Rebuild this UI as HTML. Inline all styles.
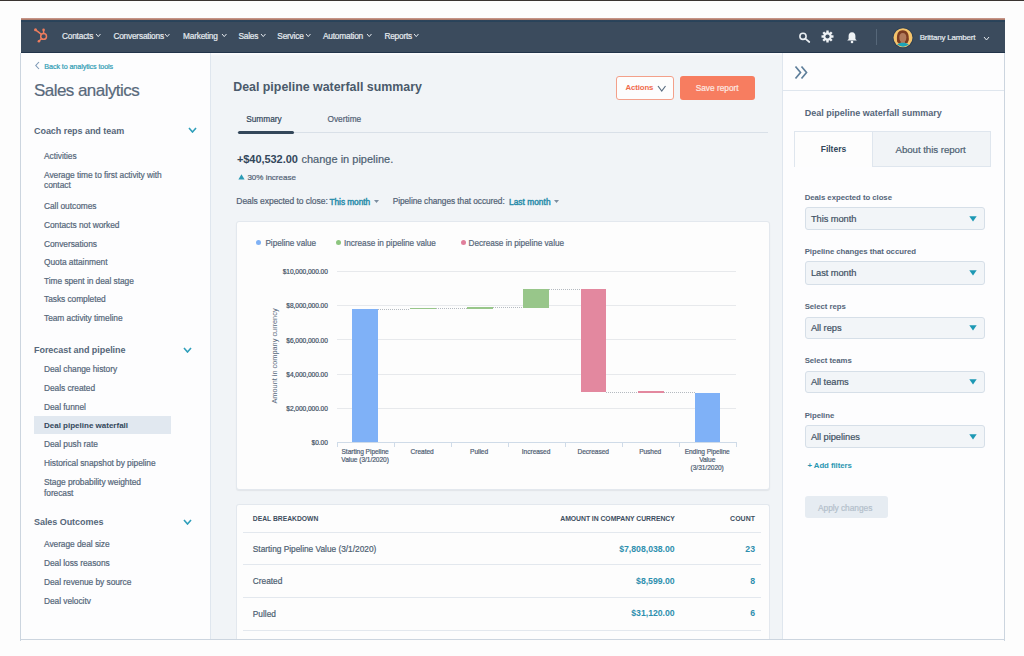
<!DOCTYPE html>
<html><head><meta charset="utf-8"><style>
html,body{margin:0;padding:0;}
body{width:1024px;height:656px;position:relative;overflow:hidden;background:#fdfdfd;font-family:"Liberation Sans", sans-serif;}
.t{position:absolute;white-space:nowrap;}
.r{-webkit-text-stroke:0.2px currentColor;}
</style></head><body>
<div style="position:absolute;left:0px;top:0px;width:1024px;height:1px;background:#3a3431;"></div>
<div style="position:absolute;left:21px;top:18px;width:984px;height:2px;background:linear-gradient(#cf9f94,#a5705f);"></div>
<div style="position:absolute;left:21px;top:20px;width:984px;height:33px;background:#3b4b5d;"></div>
<div style="position:absolute;left:21px;top:20px;width:984px;height:2px;background:linear-gradient(#2e445a,#27435a);"></div>
<div style="position:absolute;left:21px;top:52px;width:984px;height:1px;background:#22344a;"></div>
<div style="position:absolute;left:21px;top:53px;width:984px;height:587px;background:#fdfdfe;"></div>
<div style="position:absolute;left:20px;top:53px;width:1px;height:588px;background:#ccd5df;"></div>
<div style="position:absolute;left:1004px;top:53px;width:1px;height:588px;background:#ccd5df;"></div>
<div style="position:absolute;left:20px;top:639px;width:985px;height:1px;background:#ccd5df;"></div>
<div style="position:absolute;left:211px;top:53px;width:571px;height:586px;background:#f1f4f7;"></div>
<div style="position:absolute;left:211px;top:53px;width:571px;height:2.5px;background:linear-gradient(#fdfdfe,#f1f4f7);"></div>
<div style="position:absolute;left:210px;top:53px;width:1px;height:586px;background:#dfe6ee;"></div>
<div style="position:absolute;left:782px;top:53px;width:1px;height:586px;background:#dfe6ee;"></div>
<svg style="position:absolute;left:33px;top:27px" width="16" height="17" viewBox="0 0 16 17">
<g fill="none" stroke="#ee7d5e" stroke-width="1.5" stroke-linecap="round">
<circle cx="10.6" cy="9.4" r="2.9"/>
<line x1="10.6" y1="6.5" x2="10.6" y2="3.2"/>
<line x1="8.5" y1="7.4" x2="2.8" y2="3.1"/>
<line x1="8.6" y1="11.5" x2="6.1" y2="14"/>
</g>
<circle cx="10.6" cy="2.8" r="1.3" fill="#ee7d5e"/>
<circle cx="2.5" cy="2.8" r="1.5" fill="#ee7d5e"/>
<circle cx="5.9" cy="14.2" r="1.3" fill="#ee7d5e"/>
</svg>
<div class="t r" style="left:62px;top:31.55px;font-size:8.3px;line-height:8.3px;font-weight:400;color:#e6ebf0;letter-spacing:-0.2px;">Contacts</div>
<svg style="position:absolute;left:94.7px;top:33.2px" width="6.5" height="4.6" viewBox="0 0 6.5 4.6"><polyline points="1,1 3.25,3.6 5.5,1" fill="none" stroke="#e6ebf0" stroke-width="1"/></svg>
<div class="t r" style="left:113.4px;top:31.55px;font-size:8.3px;line-height:8.3px;font-weight:400;color:#e6ebf0;letter-spacing:-0.2px;">Conversations</div>
<svg style="position:absolute;left:164.39999999999998px;top:33.2px" width="6.5" height="4.6" viewBox="0 0 6.5 4.6"><polyline points="1,1 3.25,3.6 5.5,1" fill="none" stroke="#e6ebf0" stroke-width="1"/></svg>
<div class="t r" style="left:183px;top:31.55px;font-size:8.3px;line-height:8.3px;font-weight:400;color:#e6ebf0;letter-spacing:-0.2px;">Marketing</div>
<svg style="position:absolute;left:220.79999999999998px;top:33.2px" width="6.5" height="4.6" viewBox="0 0 6.5 4.6"><polyline points="1,1 3.25,3.6 5.5,1" fill="none" stroke="#e6ebf0" stroke-width="1"/></svg>
<div class="t r" style="left:238.4px;top:31.55px;font-size:8.3px;line-height:8.3px;font-weight:400;color:#e6ebf0;letter-spacing:-0.2px;">Sales</div>
<svg style="position:absolute;left:259.59999999999997px;top:33.2px" width="6.5" height="4.6" viewBox="0 0 6.5 4.6"><polyline points="1,1 3.25,3.6 5.5,1" fill="none" stroke="#e6ebf0" stroke-width="1"/></svg>
<div class="t r" style="left:277.3px;top:31.55px;font-size:8.3px;line-height:8.3px;font-weight:400;color:#e6ebf0;letter-spacing:-0.2px;">Service</div>
<svg style="position:absolute;left:304.6px;top:33.2px" width="6.5" height="4.6" viewBox="0 0 6.5 4.6"><polyline points="1,1 3.25,3.6 5.5,1" fill="none" stroke="#e6ebf0" stroke-width="1"/></svg>
<div class="t r" style="left:323px;top:31.55px;font-size:8.3px;line-height:8.3px;font-weight:400;color:#e6ebf0;letter-spacing:-0.2px;">Automation</div>
<svg style="position:absolute;left:366.3px;top:33.2px" width="6.5" height="4.6" viewBox="0 0 6.5 4.6"><polyline points="1,1 3.25,3.6 5.5,1" fill="none" stroke="#e6ebf0" stroke-width="1"/></svg>
<div class="t r" style="left:384.4px;top:31.55px;font-size:8.3px;line-height:8.3px;font-weight:400;color:#e6ebf0;letter-spacing:-0.2px;">Reports</div>
<svg style="position:absolute;left:413.29999999999995px;top:33.2px" width="6.5" height="4.6" viewBox="0 0 6.5 4.6"><polyline points="1,1 3.25,3.6 5.5,1" fill="none" stroke="#e6ebf0" stroke-width="1"/></svg>
<svg style="position:absolute;left:797.8px;top:31px" width="13" height="13" viewBox="0 0 13 13"><circle cx="5" cy="5.3" r="3.1" fill="none" stroke="#e9eef2" stroke-width="1.6"/><line x1="7.3" y1="7.6" x2="11.3" y2="11" stroke="#e9eef2" stroke-width="1.7" stroke-linecap="round"/></svg>
<svg style="position:absolute;left:821px;top:30.3px" width="13" height="13" viewBox="0 0 13 13"><g transform="translate(6.5 6.5)" fill="#eef2f5"><circle r="4.2"/><g id="tooth"><rect x="-1.2" y="-6" width="2.4" height="3" /></g><rect x="-1.2" y="-6" width="2.4" height="3" transform="rotate(45)"/><rect x="-1.2" y="-6" width="2.4" height="3" transform="rotate(90)"/><rect x="-1.2" y="-6" width="2.4" height="3" transform="rotate(135)"/><rect x="-1.2" y="-6" width="2.4" height="3" transform="rotate(180)"/><rect x="-1.2" y="-6" width="2.4" height="3" transform="rotate(225)"/><rect x="-1.2" y="-6" width="2.4" height="3" transform="rotate(270)"/><rect x="-1.2" y="-6" width="2.4" height="3" transform="rotate(315)"/></g><circle cx="6.5" cy="6.5" r="2.1" fill="#3b4b5d"/></svg>
<svg style="position:absolute;left:846px;top:31px" width="12" height="13" viewBox="0 0 12 13"><path d="M6 1.2 C3.6 1.2 2.6 3 2.6 5 L2.6 8 L1.2 9.6 L10.8 9.6 L9.4 8 L9.4 5 C9.4 3 8.4 1.2 6 1.2 Z" fill="#eef2f5"/><circle cx="6" cy="11" r="1.3" fill="#eef2f5"/></svg>
<div style="position:absolute;left:876px;top:29px;width:1px;height:16px;background:#566779;"></div>
<svg style="position:absolute;left:892px;top:26.5px" width="22" height="22" viewBox="0 0 22 22"><circle cx="11" cy="10.8" r="10.4" fill="#2c3e52"/><circle cx="11" cy="10.8" r="9.5" fill="#f5c46c"/><path d="M5.2 15 C4.2 8 5.5 3.2 10.8 3.2 C15.5 3.2 17 7 16.8 13 L15.5 16 L7 16.5 Z" fill="#7b3c22"/><ellipse cx="10.8" cy="10.4" rx="3.5" ry="4.5" fill="#b07a5c"/><path d="M8.8 14 L12.8 14 L13 16 L8.6 16 Z" fill="#b07a5c"/><path d="M5.2 17.6 C6.5 16.4 8.5 15.8 10.8 15.8 C13.3 15.8 15.3 16.4 16.8 17.6 A9.3 9.3 0 0 1 5.2 17.6 Z" fill="#1ca5b8"/></svg>
<div class="t r" style="left:919.7px;top:34.30px;font-size:8px;line-height:8px;font-weight:400;color:#e6ebf0;letter-spacing:-0.2px;">Brittany Lambert</div>
<svg style="position:absolute;left:982.5px;top:36px" width="7" height="5" viewBox="0 0 7 5"><polyline points="1,1 3.5,4 6,1" fill="none" stroke="#e6ebf0" stroke-width="1"/></svg>
<svg style="position:absolute;left:34px;top:61px" width="7" height="9" viewBox="0 0 7 9"><polyline points="5,1 1.8,4.5 5,8" fill="none" stroke="#7c98b6" stroke-width="1.1"/></svg>
<div class="t r" style="left:44.3px;top:62.70px;font-size:7.2px;line-height:7.2px;font-weight:400;color:#2e9cb4;letter-spacing:-0.1px;">Back to analytics tools</div>
<div class="t r" style="left:34px;top:82.00px;font-size:17px;line-height:17px;font-weight:400;color:#58697b;letter-spacing:-0.55px;">Sales analytics</div>
<div class="t" style="left:34px;top:126.70px;font-size:9px;line-height:9px;font-weight:700;color:#56677a;letter-spacing:-0.05px;">Coach reps and team</div>
<svg style="position:absolute;left:187.5px;top:127.0px" width="9" height="6" viewBox="0 0 9 6"><polyline points="1,1 4.5,5 8,1" fill="none" stroke="#2f9fbb" stroke-width="1.6"/></svg>
<div class="t" style="left:34px;top:346.20px;font-size:9px;line-height:9px;font-weight:700;color:#56677a;letter-spacing:-0.05px;">Forecast and pipeline</div>
<svg style="position:absolute;left:183px;top:346.5px" width="9" height="6" viewBox="0 0 9 6"><polyline points="1,1 4.5,5 8,1" fill="none" stroke="#2f9fbb" stroke-width="1.6"/></svg>
<div class="t" style="left:34px;top:518.30px;font-size:9px;line-height:9px;font-weight:700;color:#56677a;letter-spacing:-0.05px;">Sales Outcomes</div>
<svg style="position:absolute;left:183px;top:518.6px" width="9" height="6" viewBox="0 0 9 6"><polyline points="1,1 4.5,5 8,1" fill="none" stroke="#2f9fbb" stroke-width="1.6"/></svg>
<div class="t r" style="left:44px;top:152.10px;font-size:8.4px;line-height:8.4px;font-weight:400;color:#55677a;letter-spacing:-0.05px;">Activities</div>
<div class="t r" style="left:44px;top:170.50px;font-size:8.4px;line-height:8.4px;font-weight:400;color:#55677a;letter-spacing:-0.05px;">Average time to first activity with</div>
<div class="t r" style="left:44px;top:180.90px;font-size:8.4px;line-height:8.4px;font-weight:400;color:#55677a;letter-spacing:-0.05px;">contact</div>
<div class="t r" style="left:44px;top:202.00px;font-size:8.4px;line-height:8.4px;font-weight:400;color:#55677a;letter-spacing:-0.05px;">Call outcomes</div>
<div class="t r" style="left:44px;top:220.80px;font-size:8.4px;line-height:8.4px;font-weight:400;color:#55677a;letter-spacing:-0.05px;">Contacts not worked</div>
<div class="t r" style="left:44px;top:239.50px;font-size:8.4px;line-height:8.4px;font-weight:400;color:#55677a;letter-spacing:-0.05px;">Conversations</div>
<div class="t r" style="left:44px;top:258.00px;font-size:8.4px;line-height:8.4px;font-weight:400;color:#55677a;letter-spacing:-0.05px;">Quota attainment</div>
<div class="t r" style="left:44px;top:276.80px;font-size:8.4px;line-height:8.4px;font-weight:400;color:#55677a;letter-spacing:-0.05px;">Time spent in deal stage</div>
<div class="t r" style="left:44px;top:295.30px;font-size:8.4px;line-height:8.4px;font-weight:400;color:#55677a;letter-spacing:-0.05px;">Tasks completed</div>
<div class="t r" style="left:44px;top:313.80px;font-size:8.4px;line-height:8.4px;font-weight:400;color:#55677a;letter-spacing:-0.05px;">Team activity timeline</div>
<div class="t r" style="left:44px;top:365.40px;font-size:8.4px;line-height:8.4px;font-weight:400;color:#55677a;letter-spacing:-0.05px;">Deal change history</div>
<div class="t r" style="left:44px;top:384.10px;font-size:8.4px;line-height:8.4px;font-weight:400;color:#55677a;letter-spacing:-0.05px;">Deals created</div>
<div class="t r" style="left:44px;top:402.50px;font-size:8.4px;line-height:8.4px;font-weight:400;color:#55677a;letter-spacing:-0.05px;">Deal funnel</div>
<div class="t r" style="left:44px;top:440.10px;font-size:8.4px;line-height:8.4px;font-weight:400;color:#55677a;letter-spacing:-0.05px;">Deal push rate</div>
<div class="t r" style="left:44px;top:458.60px;font-size:8.4px;line-height:8.4px;font-weight:400;color:#55677a;letter-spacing:-0.05px;">Historical snapshot by pipeline</div>
<div class="t r" style="left:44px;top:477.50px;font-size:8.4px;line-height:8.4px;font-weight:400;color:#55677a;letter-spacing:-0.05px;">Stage probability weighted</div>
<div class="t r" style="left:44px;top:488.90px;font-size:8.4px;line-height:8.4px;font-weight:400;color:#55677a;letter-spacing:-0.05px;">forecast</div>
<div class="t r" style="left:44px;top:540.30px;font-size:8.4px;line-height:8.4px;font-weight:400;color:#55677a;letter-spacing:-0.05px;">Average deal size</div>
<div class="t r" style="left:44px;top:559.30px;font-size:8.4px;line-height:8.4px;font-weight:400;color:#55677a;letter-spacing:-0.05px;">Deal loss reasons</div>
<div class="t r" style="left:44px;top:578.00px;font-size:8.4px;line-height:8.4px;font-weight:400;color:#55677a;letter-spacing:-0.05px;">Deal revenue by source</div>
<div class="t r" style="left:44px;top:596.80px;font-size:8.4px;line-height:8.4px;font-weight:400;color:#55677a;letter-spacing:-0.05px;">Deal velocitv</div>
<div style="position:absolute;left:34px;top:416px;width:136.5px;height:17.5px;background:#e1e8f0;"></div>
<div class="t" style="left:44px;top:421.60px;font-size:8px;line-height:8px;font-weight:700;color:#33475b;letter-spacing:0px;">Deal pipeline waterfall</div>
<div class="t" style="left:233.2px;top:81.10px;font-size:12.4px;line-height:12.4px;font-weight:700;color:#4a5a6b;letter-spacing:0px;">Deal pipeline waterfall summary</div>
<div style="position:absolute;left:616px;top:76px;width:57.5px;height:23.5px;border:1px solid #f3a08a;border-radius:3px;background:#fdfdfd;box-sizing:border-box;"></div>
<div class="t" style="left:625.4px;top:84.30px;font-size:7.8px;line-height:7.8px;font-weight:700;color:#f06a4b;letter-spacing:-0.1px;">Actions</div>
<svg style="position:absolute;left:657.3px;top:84.6px" width="9.5" height="7" viewBox="0 0 9.5 7"><polyline points="1,1 4.75,6 8.5,1" fill="none" stroke="#5b6e82" stroke-width="1.2"/></svg>
<div style="position:absolute;left:680px;top:76px;width:75px;height:23.5px;background:#f77d60;border-radius:3px;"></div>
<div class="t r" style="left:695.7px;top:84.35px;font-size:8.3px;line-height:8.3px;font-weight:400;color:#fde9e3;letter-spacing:0px;">Save report</div>
<div class="t r" style="left:246.2px;top:115.25px;font-size:8.3px;line-height:8.3px;font-weight:400;color:#33475b;letter-spacing:0px;">Summary</div>
<div class="t r" style="left:327.5px;top:115.25px;font-size:8.3px;line-height:8.3px;font-weight:400;color:#516275;letter-spacing:0px;">Overtime</div>
<div style="position:absolute;left:237px;top:131.8px;width:531px;height:1.0px;background:#d9e0e8;"></div>
<div style="position:absolute;left:238px;top:130.7px;width:56px;height:3.200000000000017px;background:#34475a;border-radius:2px;"></div>
<div class="t" style="left:236.9px;top:154.40px;font-size:11px;line-height:11px;font-weight:700;color:#33475b;letter-spacing:-0.05px;">+$40,532.00</div>
<div class="t r" style="left:301.5px;top:154.40px;font-size:11px;line-height:11px;font-weight:400;color:#4d5f72;letter-spacing:0px;">change in pipeline.</div>
<svg style="position:absolute;left:238px;top:174px" width="7" height="6" viewBox="0 0 7 6"><polygon points="3.5,0.3 6.6,5.6 0.4,5.6" fill="#2a9bb5"/></svg>
<div class="t r" style="left:247.4px;top:174.00px;font-size:8px;line-height:8px;font-weight:400;color:#516275;letter-spacing:0px;">30% increase</div>
<div class="t r" style="left:236.3px;top:197.35px;font-size:8.5px;line-height:8.5px;font-weight:400;color:#516275;letter-spacing:-0.05px;">Deals expected to close:</div>
<div class="t r" style="left:329.5px;top:197.75px;font-size:8.3px;line-height:8.3px;font-weight:400;color:#2a8dab;letter-spacing:-0.05px;-webkit-text-stroke:0.45px currentColor;">This month</div>
<svg style="position:absolute;left:374px;top:200px" width="5" height="3" viewBox="0 0 5 3"><polygon points="0,0 5,0 2.5,3" fill="#7c8ea0"/></svg>
<div class="t r" style="left:392.7px;top:197.45px;font-size:8.3px;line-height:8.3px;font-weight:400;color:#516275;letter-spacing:-0.05px;">Pipeline changes that occured:</div>
<div class="t r" style="left:509px;top:197.75px;font-size:8.3px;line-height:8.3px;font-weight:400;color:#2a8dab;letter-spacing:0.05px;-webkit-text-stroke:0.45px currentColor;">Last month</div>
<svg style="position:absolute;left:553.5px;top:200px" width="5" height="3" viewBox="0 0 5 3"><polygon points="0,0 5,0 2.5,3" fill="#7c8ea0"/></svg>
<div style="position:absolute;left:235.5px;top:221px;width:534.0px;height:268.5px;background:#fdfdfd;border:1px solid #e3e8ee;border-radius:3px;box-sizing:border-box;box-shadow:0 1px 1px rgba(45,62,80,0.08);"></div>
<div style="position:absolute;left:256.2px;top:239.7px;width:5.0px;height:5.0px;background:#7fb1f5;border-radius:50%;"></div>
<div class="t r" style="left:265.4px;top:239.50px;font-size:8.2px;line-height:8.2px;font-weight:400;color:#56677a;letter-spacing:-0.02px;">Pipeline value</div>
<div style="position:absolute;left:336.2px;top:239.7px;width:5.0px;height:5.0px;background:#8cc57e;border-radius:50%;"></div>
<div class="t r" style="left:344px;top:239.50px;font-size:8.2px;line-height:8.2px;font-weight:400;color:#56677a;letter-spacing:-0.02px;">Increase in pipeline value</div>
<div style="position:absolute;left:460.7px;top:239.7px;width:5.0px;height:5.0px;background:#e07f9b;border-radius:50%;"></div>
<div class="t r" style="left:468.5px;top:239.50px;font-size:8.2px;line-height:8.2px;font-weight:400;color:#56677a;letter-spacing:-0.02px;">Decrease in pipeline value</div>
<div style="position:absolute;left:336.6px;top:271px;width:399.1px;height:1px;background:#e7e9ec;"></div>
<div class="t r" style="right:696.2px;top:269.20px;font-size:6.6px;line-height:6.6px;font-weight:400;color:#3f5164;letter-spacing:-0.05px;">$10,000,000.00</div>
<div style="position:absolute;left:336.6px;top:305px;width:399.1px;height:1px;background:#e7e9ec;"></div>
<div class="t r" style="right:696.2px;top:303.40px;font-size:6.6px;line-height:6.6px;font-weight:400;color:#3f5164;letter-spacing:-0.05px;">$8,000,000.00</div>
<div style="position:absolute;left:336.6px;top:339px;width:399.1px;height:1px;background:#e7e9ec;"></div>
<div class="t r" style="right:696.2px;top:337.60px;font-size:6.6px;line-height:6.6px;font-weight:400;color:#3f5164;letter-spacing:-0.05px;">$6,000,000.00</div>
<div style="position:absolute;left:336.6px;top:374px;width:399.1px;height:1px;background:#e7e9ec;"></div>
<div class="t r" style="right:696.2px;top:371.80px;font-size:6.6px;line-height:6.6px;font-weight:400;color:#3f5164;letter-spacing:-0.05px;">$4,000,000.00</div>
<div style="position:absolute;left:336.6px;top:408px;width:399.1px;height:1px;background:#e7e9ec;"></div>
<div class="t r" style="right:696.2px;top:406.00px;font-size:6.6px;line-height:6.6px;font-weight:400;color:#3f5164;letter-spacing:-0.05px;">$2,000,000.00</div>
<div class="t r" style="right:696.2px;top:439.80px;font-size:6.6px;line-height:6.6px;font-weight:400;color:#3f5164;letter-spacing:-0.05px;">$0.00</div>
<div class="t" style="left:274.8px;top:356.3px;font-size:7.35px;line-height:8px;color:#5a6b7d;transform:translate(-50%,-50%) rotate(-90deg);">Amount in company currency</div>
<div style="position:absolute;left:336.6px;top:442px;width:399.4px;height:1px;background:#cfdbe8;"></div>
<div style="position:absolute;left:337px;top:442px;width:1px;height:5px;background:#cfdbe8;"></div>
<div style="position:absolute;left:394px;top:442px;width:1px;height:5px;background:#cfdbe8;"></div>
<div style="position:absolute;left:451px;top:442px;width:1px;height:5px;background:#cfdbe8;"></div>
<div style="position:absolute;left:508px;top:442px;width:1px;height:5px;background:#cfdbe8;"></div>
<div style="position:absolute;left:565px;top:442px;width:1px;height:5px;background:#cfdbe8;"></div>
<div style="position:absolute;left:622px;top:442px;width:1px;height:5px;background:#cfdbe8;"></div>
<div style="position:absolute;left:679px;top:442px;width:1px;height:5px;background:#cfdbe8;"></div>
<div style="position:absolute;left:736px;top:442px;width:1px;height:5px;background:#cfdbe8;"></div>
<div style="position:absolute;left:352.4px;top:308.7px;width:25.80000000000001px;height:133.3px;background:#7fb1f7;"></div>
<div style="position:absolute;left:410.2px;top:307.8px;width:25.600000000000023px;height:1.599999999999966px;background:#98c68a;"></div>
<div style="position:absolute;left:467px;top:307.4px;width:25.600000000000023px;height:1.6000000000000227px;background:#98c68a;"></div>
<div style="position:absolute;left:523.3px;top:289.3px;width:25.90000000000009px;height:18.30000000000001px;background:#98c68a;"></div>
<div style="position:absolute;left:580.7px;top:289.3px;width:25.5px;height:102.59999999999997px;background:#e3889f;"></div>
<div style="position:absolute;left:638.1px;top:391.2px;width:25.5px;height:2.0px;background:#e3889f;"></div>
<div style="position:absolute;left:694.7px;top:393.2px;width:25.699999999999932px;height:48.80000000000001px;background:#7fb1f7;"></div>
<div style="position:absolute;left:378.2px;top:308.5px;width:32.0px;height:1.0px;background-image:linear-gradient(90deg,#b4bac0 50%,transparent 50%);background-size:2px 1px;"></div>
<div style="position:absolute;left:435.8px;top:308.3px;width:31.19999999999999px;height:1.0px;background-image:linear-gradient(90deg,#b4bac0 50%,transparent 50%);background-size:2px 1px;"></div>
<div style="position:absolute;left:492.6px;top:307.3px;width:30.699999999999932px;height:1.0px;background-image:linear-gradient(90deg,#b4bac0 50%,transparent 50%);background-size:2px 1px;"></div>
<div style="position:absolute;left:549.2px;top:289.0px;width:31.5px;height:1.0px;background-image:linear-gradient(90deg,#b4bac0 50%,transparent 50%);background-size:2px 1px;"></div>
<div style="position:absolute;left:606.2px;top:391.6px;width:31.899999999999977px;height:1.0px;background-image:linear-gradient(90deg,#b4bac0 50%,transparent 50%);background-size:2px 1px;"></div>
<div style="position:absolute;left:663.6px;top:392.4px;width:31.100000000000023px;height:1.0px;background-image:linear-gradient(90deg,#b4bac0 50%,transparent 50%);background-size:2px 1px;"></div>
<div class="t r" style="left:365.1px;transform:translateX(-50%);top:448.60px;font-size:6.6px;line-height:6.6px;font-weight:400;color:#4f6073;letter-spacing:-0.05px;">Starting Pipeline</div>
<div class="t r" style="left:365.1px;transform:translateX(-50%);top:456.85px;font-size:6.6px;line-height:6.6px;font-weight:400;color:#4f6073;letter-spacing:-0.05px;">Value (3/1/2020)</div>
<div class="t r" style="left:422.1px;transform:translateX(-50%);top:448.60px;font-size:6.6px;line-height:6.6px;font-weight:400;color:#4f6073;letter-spacing:-0.05px;">Created</div>
<div class="t r" style="left:479.1px;transform:translateX(-50%);top:448.60px;font-size:6.6px;line-height:6.6px;font-weight:400;color:#4f6073;letter-spacing:-0.05px;">Pulled</div>
<div class="t r" style="left:536.1px;transform:translateX(-50%);top:448.60px;font-size:6.6px;line-height:6.6px;font-weight:400;color:#4f6073;letter-spacing:-0.05px;">Increased</div>
<div class="t r" style="left:593.2px;transform:translateX(-50%);top:448.60px;font-size:6.6px;line-height:6.6px;font-weight:400;color:#4f6073;letter-spacing:-0.05px;">Decreased</div>
<div class="t r" style="left:650.2px;transform:translateX(-50%);top:448.60px;font-size:6.6px;line-height:6.6px;font-weight:400;color:#4f6073;letter-spacing:-0.05px;">Pushed</div>
<div class="t r" style="left:707.2px;transform:translateX(-50%);top:448.60px;font-size:6.6px;line-height:6.6px;font-weight:400;color:#4f6073;letter-spacing:-0.05px;">Ending Pipeline</div>
<div class="t r" style="left:707.2px;transform:translateX(-50%);top:456.85px;font-size:6.6px;line-height:6.6px;font-weight:400;color:#4f6073;letter-spacing:-0.05px;">Value</div>
<div class="t r" style="left:707.2px;transform:translateX(-50%);top:465.10px;font-size:6.6px;line-height:6.6px;font-weight:400;color:#4f6073;letter-spacing:-0.05px;">(3/31/2020)</div>
<div style="position:absolute;left:235.5px;top:503.5px;width:534.0px;height:135.5px;background:#fdfdfd;border:1px solid #e3e8ee;border-bottom:none;border-radius:3px 3px 0 0;box-sizing:border-box;"></div>
<div class="t" style="left:252.8px;top:515.62px;font-size:6.75px;line-height:6.75px;font-weight:700;color:#3d4e60;letter-spacing:0px;">DEAL BREAKDOWN</div>
<div class="t" style="right:349.29999999999995px;top:515.58px;font-size:6.85px;line-height:6.85px;font-weight:700;color:#3d4e60;letter-spacing:-0.05px;">AMOUNT IN COMPANY CURRENCY</div>
<div class="t" style="right:269px;top:515.20px;font-size:7px;line-height:7px;font-weight:700;color:#3d4e60;letter-spacing:0px;">COUNT</div>
<div style="position:absolute;left:243.4px;top:532px;width:517.7px;height:1px;background:#e3e8ee;"></div>
<div style="position:absolute;left:243.4px;top:564px;width:517.7px;height:1px;background:#e3e8ee;"></div>
<div style="position:absolute;left:243.4px;top:597px;width:517.7px;height:1px;background:#e3e8ee;"></div>
<div style="position:absolute;left:243.4px;top:630px;width:517.7px;height:1px;background:#e3e8ee;"></div>
<div class="t r" style="left:252.8px;top:545.05px;font-size:8.3px;line-height:8.3px;font-weight:400;color:#4d5f72;letter-spacing:0px;">Starting Pipeline Value (3/1/2020)</div>
<div class="t" style="right:349.29999999999995px;top:544.85px;font-size:8.7px;line-height:8.7px;font-weight:700;color:#2e8fae;letter-spacing:0px;">$7,808,038.00</div>
<div class="t" style="right:269px;top:544.85px;font-size:8.7px;line-height:8.7px;font-weight:700;color:#2e8fae;letter-spacing:0px;">23</div>
<div class="t r" style="left:252.8px;top:577.25px;font-size:8.3px;line-height:8.3px;font-weight:400;color:#4d5f72;letter-spacing:0px;">Created</div>
<div class="t" style="right:349.29999999999995px;top:577.05px;font-size:8.7px;line-height:8.7px;font-weight:700;color:#2e8fae;letter-spacing:0px;">$8,599.00</div>
<div class="t" style="right:269px;top:577.05px;font-size:8.7px;line-height:8.7px;font-weight:700;color:#2e8fae;letter-spacing:0px;">8</div>
<div class="t r" style="left:252.8px;top:609.65px;font-size:8.3px;line-height:8.3px;font-weight:400;color:#4d5f72;letter-spacing:0px;">Pulled</div>
<div class="t" style="right:349.29999999999995px;top:609.45px;font-size:8.7px;line-height:8.7px;font-weight:700;color:#2e8fae;letter-spacing:0px;">$31,120.00</div>
<div class="t" style="right:269px;top:609.45px;font-size:8.7px;line-height:8.7px;font-weight:700;color:#2e8fae;letter-spacing:0px;">6</div>
<svg style="position:absolute;left:794px;top:65px" width="15" height="15" viewBox="0 0 15 15"><polyline points="1.5,1.5 6.5,7.5 1.5,13.5" fill="none" stroke="#5f7f9b" stroke-width="1.7"/><polyline points="7.5,1.5 12.5,7.5 7.5,13.5" fill="none" stroke="#5f7f9b" stroke-width="1.7"/></svg>
<div style="position:absolute;left:783px;top:90px;width:221px;height:1px;background:#dfe6ee;"></div>
<div class="t" style="left:804.7px;top:109.10px;font-size:9px;line-height:9px;font-weight:700;color:#55667a;letter-spacing:0px;">Deal pipeline waterfall summary</div>
<div style="position:absolute;left:794.4px;top:131.2px;width:196.39999999999998px;height:35.400000000000006px;border:1px solid #dfe6ee;border-bottom:none;box-sizing:border-box;background:#fdfdfd;"></div>
<div style="position:absolute;left:871.8px;top:131.2px;width:119.0px;height:35.400000000000006px;border:1px solid #dfe6ee;box-sizing:border-box;background:#f1f4f7;"></div>
<div class="t" style="left:820.7px;top:145.45px;font-size:8.5px;line-height:8.5px;font-weight:700;color:#33475b;letter-spacing:0px;">Filters</div>
<div class="t r" style="left:895.5px;top:144.85px;font-size:9.7px;line-height:9.7px;font-weight:400;color:#4d5f72;letter-spacing:-0.05px;">About this report</div>
<div class="t" style="left:804.7px;top:194.40px;font-size:7.8px;line-height:7.8px;font-weight:700;color:#55667a;letter-spacing:-0.05px;">Deals expected to close</div>
<div style="position:absolute;left:804.7px;top:207px;width:180.39999999999998px;height:23.30000000000001px;background:#f2f5f8;border:1px solid #d6dfe8;border-radius:3px;box-sizing:border-box;"></div>
<div class="t r" style="left:810.9px;top:214.70px;font-size:9.3px;line-height:9.3px;font-weight:400;color:#3f5164;letter-spacing:-0.05px;">This month</div>
<svg style="position:absolute;left:969px;top:215.8px" width="8" height="6" viewBox="0 0 8 6"><polygon points="0.3,0.3 7.7,0.3 4,5.6" fill="#1c98b4"/></svg>
<div class="t" style="left:804.7px;top:248.40px;font-size:7.8px;line-height:7.8px;font-weight:700;color:#55667a;letter-spacing:-0.05px;">Pipeline changes that occured</div>
<div style="position:absolute;left:804.7px;top:261.2px;width:180.39999999999998px;height:24.0px;background:#f2f5f8;border:1px solid #d6dfe8;border-radius:3px;box-sizing:border-box;"></div>
<div class="t r" style="left:810.9px;top:269.25px;font-size:9.3px;line-height:9.3px;font-weight:400;color:#3f5164;letter-spacing:-0.05px;">Last month</div>
<svg style="position:absolute;left:969px;top:270.4px" width="8" height="6" viewBox="0 0 8 6"><polygon points="0.3,0.3 7.7,0.3 4,5.6" fill="#1c98b4"/></svg>
<div class="t" style="left:804.7px;top:303.20px;font-size:7.8px;line-height:7.8px;font-weight:700;color:#55667a;letter-spacing:-0.05px;">Select reps</div>
<div style="position:absolute;left:804.7px;top:316.5px;width:180.39999999999998px;height:22.69999999999999px;background:#f2f5f8;border:1px solid #d6dfe8;border-radius:3px;box-sizing:border-box;"></div>
<div class="t r" style="left:810.9px;top:323.90px;font-size:9.3px;line-height:9.3px;font-weight:400;color:#3f5164;letter-spacing:-0.05px;">All reps</div>
<svg style="position:absolute;left:969px;top:325.1px" width="8" height="6" viewBox="0 0 8 6"><polygon points="0.3,0.3 7.7,0.3 4,5.6" fill="#1c98b4"/></svg>
<div class="t" style="left:804.7px;top:357.30px;font-size:7.8px;line-height:7.8px;font-weight:700;color:#55667a;letter-spacing:-0.05px;">Select teams</div>
<div style="position:absolute;left:804.7px;top:370.6px;width:180.39999999999998px;height:22.899999999999977px;background:#f2f5f8;border:1px solid #d6dfe8;border-radius:3px;box-sizing:border-box;"></div>
<div class="t r" style="left:810.9px;top:378.10px;font-size:9.3px;line-height:9.3px;font-weight:400;color:#3f5164;letter-spacing:-0.05px;">All teams</div>
<svg style="position:absolute;left:969px;top:379.2px" width="8" height="6" viewBox="0 0 8 6"><polygon points="0.3,0.3 7.7,0.3 4,5.6" fill="#1c98b4"/></svg>
<div class="t" style="left:804.7px;top:411.60px;font-size:7.8px;line-height:7.8px;font-weight:700;color:#55667a;letter-spacing:-0.05px;">Pipeline</div>
<div style="position:absolute;left:804.7px;top:425.2px;width:180.39999999999998px;height:22.80000000000001px;background:#f2f5f8;border:1px solid #d6dfe8;border-radius:3px;box-sizing:border-box;"></div>
<div class="t r" style="left:810.9px;top:432.65px;font-size:9.3px;line-height:9.3px;font-weight:400;color:#3f5164;letter-spacing:-0.05px;">All pipelines</div>
<svg style="position:absolute;left:969px;top:433.8px" width="8" height="6" viewBox="0 0 8 6"><polygon points="0.3,0.3 7.7,0.3 4,5.6" fill="#1c98b4"/></svg>
<div class="t" style="left:807.5px;top:461.90px;font-size:7.8px;line-height:7.8px;font-weight:700;color:#2a96b1;letter-spacing:-0.05px;">+ Add filters</div>
<div style="position:absolute;left:805px;top:496.3px;width:83.29999999999995px;height:22.19999999999999px;background:#e6ecf2;border-radius:3px;"></div>
<div class="t r" style="left:818px;top:503.70px;font-size:8.4px;line-height:8.4px;font-weight:400;color:#b3bfcb;letter-spacing:-0.05px;">Apply changes</div>
</body></html>
